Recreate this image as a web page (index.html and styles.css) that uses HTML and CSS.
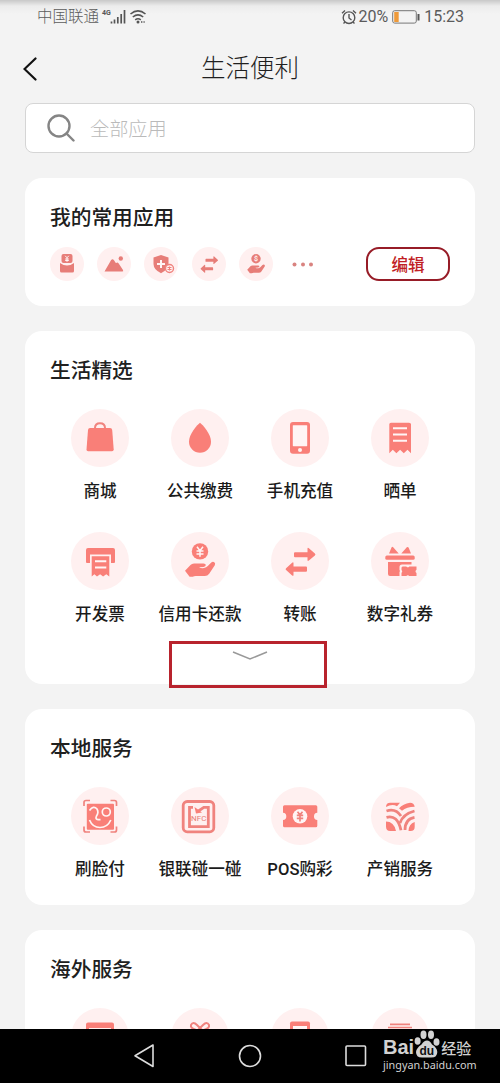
FILE: index.html
```html
<!DOCTYPE html>
<html lang="zh-CN">
<head>
<meta charset="utf-8">
<title>生活便利</title>
<link rel="stylesheet" href="styles.css">
</head>
<body>
<svg class="defs" width="0" height="0" aria-hidden="true">
  <symbol id="transfer" viewBox="0 0 58 58">
    <path d="M24 20.2h12.5v-3.4q0-1.6 1.4-.5l6 5.3q1.100.9 0 1.900l-6 5.100q-1.400 1-1.400-.5v-2.800H24q-1 0-1-1v-3.100q0-1 1-1z"/>
    <path d="M35 34.600H22.500v-3.400q0-1.600-1.400-.5l-6 5.500q-1.100.9 0 1.900l6 5.300q1.400 1 1.400-.5v-3.200H35q1 0 1-1v-3.100q0-1-1-1z"/>
  </symbol>
  <symbol id="hand" viewBox="0 0 58 58">
    <path d="M14 38.800l5.500-5.800q1.300-1.400 3.500-1.500h9.500q2.300 0 2.300 1.500 0 1.600-2.300 1.900l-4.500.4q2 1.200 5 .8 2.200-.3 3.800-2l3.200-3.400q1.700-1.500 3.300-.5 1.400 1 .5 3l-5.600 8.600q-1.600 2.200-4.400 2.200h-9q-2 0-3 .8h-3.200z"/>
  </symbol>
</svg>
<main class="screen">
  <div class="status">
    <span class="carrier">中国联通</span>
    <svg class="signal" viewBox="0 0 48 20"><text x="2" y="8" class="g4">4G</text><path class="bars" d="M11.500 14.500v2M14.500 12.500v4M17.800 10v6.500M21.200 7v9.500M24.500 3v13.500"/><path class="wifi" d="M30.500 7q7.500-6.200 15 0M32.800 10q5.200-4.200 10.400 0M35.200 12.800q2.800-2.200 5.600 0"/><circle cx="38" cy="15" r="1.500"/><path d="M41 15h1.400M43.500 15h1.200" class="wifi"/></svg>
    <span class="grow"></span>
    <svg class="alarm" viewBox="0 0 16 16"><circle cx="8" cy="8.700" r="5.800"/><path d="M8 5v4l2.500 2M1 4.200L4 1.500M12 1.500l3 2.700M4 13l-1.500 1.500M12 13l1.500 1.500"/></svg>
    <span class="percent">20%</span>
    <svg class="battery" viewBox="0 0 28 14"><rect x=".7" y=".7" width="23.600" height="12.400" rx="2"/><path class="charge" d="M2.200 2h4.500v10H2.200z"/><path class="tip" d="M26.500 4v6.500"/></svg>
    <span class="clock">15:23</span>
  </div>
  <header class="header">
    <svg class="back" viewBox="0 0 14 24"><path d="M12.500 1.500L1.500 12l11 10.500"/></svg>
    <h1 class="page-title">生活便利</h1>
  </header>
  <div class="search">
    <svg class="lens" viewBox="0 0 28 28"><circle cx="12" cy="12" r="10.500"/><path d="M19.500 19.500l7 7"/></svg>
    <span>全部应用</span>
  </div>

  <section class="card favorites">
    <h2 class="card-title">我的常用应用</h2>
    <div class="fav-row">
      <div class="fav-icons">
        <svg class="icon mini" viewBox="0 0 34 34"><rect x="11.500" y="7" width="11" height="9" rx="2"/><path d="M10 16q7 5 14 0v8q0 1.500-1.500 1.500h-11Q10 25.500 10 24z"/><path class="cut thin" d="M15.200 8.800l1.800 2 1.800-2M17 10.800v4M15.200 12h3.600M15.200 13.500h3.600"/></svg>
        <svg class="icon mini" viewBox="0 0 34 34"><path d="M7.500 24.500L14 13.300q1.500-2.300 3 0l2 3q1.300-1.600 2.700.2l4.300 6.500q.8 1.500-.8 1.500z"/><circle cx="23.800" cy="11.500" r="2.200"/></svg>
        <svg class="icon mini" viewBox="0 0 34 34"><path d="M17 8l7.500 2.500v6.500q0 5.500-7.500 9.200-7.500-3.700-7.500-9.200v-6.500z"/><path class="cut" d="M17 13v8M13 17h8"/><circle class="ring" cx="25.500" cy="21.500" r="4"/><path class="line thin" d="M23.500 20.500h4M23.500 22.500h4M25.500 19.500v4"/></svg>
        <svg class="icon mini" viewBox="0 0 58 58"><use href="#transfer"/></svg>
        <svg class="icon mini" viewBox="0 0 58 58"><circle cx="29" cy="20" r="8"/><text x="29" y="24" class="dollar">$</text><use href="#hand"/></svg>
        <svg class="more" viewBox="0 0 34 34"><circle cx="8.500" cy="17.500" r="2"/><circle cx="17" cy="17.500" r="2"/><circle cx="25" cy="17.500" r="2"/></svg>
      </div>
      <button class="edit">编辑</button>
    </div>
  </section>

  <section class="card featured">
    <h2 class="card-title">生活精选</h2>
    <div class="apps">
      <div class="app"><svg class="icon" viewBox="0 0 58 58"><path class="line" d="M24 20v-1q0-4.800 5-4.800t5 4.800v1"/><path d="M19 19h20q2 0 2.200 2l1.500 19.500q0 1.800-1.700 1.800H17.200q-1.800 0-1.700-1.800L17 21q.2-2 2-2z"/></svg><span>商城</span></div>
      <div class="app"><svg class="icon" viewBox="0 0 58 58"><path d="M29 13.700C32 16 40 25 40 32.700a11 11 0 0 1-22 0C18 25 26 16 29 13.700z"/></svg><span>公共缴费</span></div>
      <div class="app"><svg class="icon" viewBox="0 0 58 58"><rect x="19" y="13" width="20" height="31.700" rx="3"/><rect class="hole" x="21.800" y="16.200" width="14.400" height="21" rx=".6"/><circle class="hole" cx="29" cy="41" r="2"/></svg><span>手机充值</span></div>
      <div class="app"><svg class="icon" viewBox="0 0 58 58"><path d="M20 13.700h18q2 0 2 1.500v29l-3.500-3.500-3.700 3.500-3.700-3.500-3.700 3.500-3.600-3.500-3.500 3.500v-29q0-1.500 1.700-1.500z"/><path class="cut" d="M22 19.300h14M22 25.500h14M22 31.700h14"/></svg><span>晒单</span></div>
      <div class="app"><svg class="icon" viewBox="0 0 58 58"><path d="M17 16h25q2 0 2 2v12q0 1-1 1h-3v-8.500H19V31h-3q-1 0-1-1V18q0-2 2-2z"/><path d="M20.700 24.300h17.600v20.200l-3-2.300-3.200 2.300-3-2.300-3.100 2.300-2.600-2.300-2.700 2.300z"/><path class="cut" d="M24 29.200h11.300M24 35.500h11.300"/></svg><span>开发票</span></div>
      <div class="app"><svg class="icon" viewBox="0 0 58 58"><circle cx="29" cy="19.400" r="8.200"/><path class="cut yen" d="M26 14.800l3 4 3-4M29 18.800v6M25.500 19h7M25.500 22h7"/><use href="#hand"/></svg><span>信用卡还款</span></div>
      <div class="app"><svg class="icon" viewBox="0 0 58 58"><use href="#transfer"/></svg><span>转账</span></div>
      <div class="app"><svg class="icon" viewBox="0 0 58 58"><path d="M18 21.500l2.500-6q.7-1.300 1.700-.2l5.500 6.200zM30.300 21.500l5.500-6.200q1.200-1 1.900.4l2.300 5.800z"/><rect x="14.300" y="23.500" width="29.400" height="4.300" rx="1.500"/><path d="M17 30h23.500v2.500H31q-2.500 0-2.500 2.500v3q1 1 0 2v4H19q-2 0-2-2z"/><path d="M31.500 34.500h3.800q1.500 1.700 3 0h7.200v3.200q-2 1.600 0 3.200V44h-7.200q-1.500-1.700-3 0H30.500v-3q1.500-1.600 0-3.300v-2.200z"/></svg><span>数字礼券</span></div>
    </div>
    <div class="expand"><svg class="chevron" viewBox="0 0 36 10"><path d="M1 1l17 7L35 1"/></svg></div>
  </section>

  <section class="card local">
    <h2 class="card-title">本地服务</h2>
    <div class="apps">
      <div class="app"><svg class="icon" viewBox="0 0 58 58"><path class="line slim" d="M13 19v-3.500q0-2 2-2h4M39.500 13.500h4q2 0 2 2V19M45.500 39.500V43q0 2-2 2h-4M19 45h-4q-2 0-2-2v-3.500"/><rect x="15.800" y="16.800" width="27.200" height="26" rx="1"/><path class="cut slim" d="M18.500 23.500q4-5.500 7.500-1.500 2 3.500-.5 7-1.500 3.500 1.500 3.700h2.500M18.500 33q3 7.500 10.500 7.500T39.800 33"/><circle class="cut slim" cx="35.300" cy="25" r="4"/></svg><span>刷脸付</span></div>
      <div class="app"><svg class="icon" viewBox="0 0 58 58"><rect class="ring wide" x="12.200" y="14.500" width="30.600" height="30.300" rx="4"/><path class="line wide" d="M22 20.300h-3.500v19.400h18.800V20.300h-4.500L26 25"/><path d="M23.500 20l1.500 6.500 6-1z"/><text x="27.700" y="34" class="nfc">NFC</text></svg><span>银联碰一碰</span></div>
      <div class="app"><svg class="icon" viewBox="0 0 58 58"><path d="M13.500 18.300h31.300q1.500 0 1.500 1.500v6q-3.300.2-3.300 3.600t3.300 3.600v5.800q0 1.500-1.500 1.500H13.500q-1.500 0-1.500-1.500V33q3.300-.2 3.300-3.600T12 25.800v-6q0-1.500 1.500-1.500z"/><circle class="hole" cx="29" cy="29.300" r="7.300"/><path class="line slim" d="M26.500 24.800l2.500 3 2.500-3M29 27.500v7M25.800 28.300h6.400M25.800 31.300h6.400"/></svg><span>POS购彩</span></div>
      <div class="app"><svg class="icon" viewBox="0 0 58 58"><path d="M15 20q0-4.300 4.300-4.300H29l-3 3.500q-5-2.500-11 .8zM39 15.700q4 0 4.700 4-8 0-12.700 4l-3-2.500q4-4.500 11-5.500z"/><path class="line wide" d="M15.500 24q9-3 14.500 5M15.500 30.300q11-3 14.500 13M29 36q3-9 14.500-12M34 43q0-11 9.500-12.700"/><path d="M15 34.500q8 0 10 9.500h-5.700Q15 44 15 39.500zM43.700 35q-6 2-6.200 9h2q4.200 0 4.200-4.300z"/></svg><span>产销服务</span></div>
    </div>
  </section>

  <section class="card overseas">
    <h2 class="card-title">海外服务</h2>
    <div class="apps">
      <div class="app"><svg class="icon" viewBox="0 0 58 58"><path d="M17 14.500h24q2 0 2 2V24h-3v-4H18v4h-3v-7.500q0-2 2-2z"/></svg></div>
      <div class="app"><svg class="icon" viewBox="0 0 58 58"><path class="line" d="M25 22q-6-2-5-5 2-4 6 0l7 7M33 22q6-2 5-5-2-4-6 0l-7 7"/></svg></div>
      <div class="app"><svg class="icon" viewBox="0 0 58 58"><rect x="19" y="13.500" width="20" height="31" rx="2"/><rect class="hole" x="22" y="18" width="14" height="20"/></svg></div>
      <div class="app"><svg class="icon" viewBox="0 0 58 58"><path class="line slim" d="M19 16.300h20M17 19.500h24"/></svg></div>
    </div>
  </section>

  <nav class="nav">
    <svg viewBox="0 0 26 26"><path d="M22 2v21.500L4 12.800z"/></svg>
    <svg viewBox="0 0 26 26"><circle cx="13" cy="13" r="10.500"/></svg>
    <svg viewBox="0 0 26 26"><rect x="3" y="3" width="19.500" height="19.500" rx="1"/></svg>
  </nav>
  <div class="brand">
    <div class="brand-top"><span class="bai">Bai</span><svg class="paw" viewBox="0 0 26 28"><ellipse cx="3.600" cy="11" rx="3" ry="3.800"/><ellipse cx="9.500" cy="4.800" rx="3" ry="4.200"/><ellipse cx="17" cy="4.800" rx="3" ry="4.200"/><ellipse cx="22.500" cy="12" rx="3" ry="3.800"/><path d="M13 10.500q3 0 5 4 5 3 5.300 7.500 0 5.500-6 5.500H8q-6 0-6-5.500Q2.300 18 7.500 14.500q2.500-4 5.500-4z"/><text x="12.800" y="24.500">du</text></svg><span class="exp">经验</span></div>
    <div class="domain">jingyan.baidu.com</div>
  </div>
</main>
</body>
</html>
```
FILE: styles.css
```css
* { box-sizing: border-box; }
body { margin: 0; background: #f3f3f3; font-family: Roboto, "Noto Sans CJK SC", sans-serif; color: #1b1b1b; }
.defs { position: absolute; }
.screen { position: relative; width: 500px; height: 1083px; overflow: hidden; background: linear-gradient(#c8c8c8 0, #ececec 6px, #f3f3f3 14px); }
.status { display: flex; align-items: center; height: 34px; padding: 0 36px 0 37px; font-size: 15.5px; line-height: 34px; color: #5b5b5b; font-weight: 300; }
.signal { width: 48px; height: 20px; margin-left: 1px; fill: #555; }
.g4 { font: bold 7px Roboto, sans-serif; }
.bars { stroke: #555; stroke-width: 1.7; fill: none; transform: translateY(6px); }
.signal .bars { transform: none; }
.wifi { stroke: #555; stroke-width: 1.6; fill: none; }
.grow { flex: 1; }
.alarm { width: 16px; height: 16px; fill: none; stroke: #555; stroke-width: 1.4; }
.percent { margin-left: 1px; font-weight: 400; font-size: 16px; }
.battery { width: 28px; height: 14px; margin: 0 4px; fill: none; stroke: #777; }
.battery .charge { fill: #ee9a3a; stroke: none; }
.battery .tip { stroke: #555; stroke-width: 2; }
.clock { font-weight: 400; font-size: 16px; }
.header { display: grid; grid-template-columns: 50px 1fr 50px; align-items: center; height: 69px; }
.back { width: 14px; height: 24px; margin-left: 23px; fill: none; stroke: #111; stroke-width: 2.2; stroke-linecap: round; }
.page-title { margin: 0; text-align: center; font-size: 24.5px; line-height: 36px; font-weight: 300; color: #1f1f1f; }
.search { display: flex; align-items: center; height: 50px; margin: 0 25px; padding: 0 21px; gap: 15px; border: 1px solid #d5d5d5; border-radius: 8px; background: #fff; font-size: 19.2px; font-weight: 300; color: #bababa; }
.lens { width: 28px; height: 28px; fill: none; stroke: #858585; stroke-width: 2.4; stroke-linecap: round; }
.card { margin: 25px 25px 0; padding: 25px 25px 0; border-radius: 17px; background: #fff; }
.card-title { margin: 0; font-size: 20.7px; line-height: 30px; font-weight: 500; color: #202020; }
.favorites { height: 128px; margin-top: 25px; }
.fav-row { display: flex; align-items: center; justify-content: space-between; height: 34px; margin-top: 14px; }
.fav-icons { display: flex; gap: 13.200px; }
.icon { display: block; width: 58px; height: 58px; flex: none; border-radius: 50%; background: #fff0f0; fill: #f97f78; }
.icon.mini { width: 34px; height: 34px; fill: #e77d78; }
.more { width: 34px; height: 34px; fill: #d98380; }
.line, .ring { fill: none; stroke: #f0837e; stroke-width: 2; }
.ring { fill: #fff0f0; stroke-width: 1.400; }
.cut { fill: none; stroke: #fff5f5; stroke-width: 2; }
.hole { fill: #fff5f5; }
.yen { stroke-width: 1.500; }
.slim { stroke-width: 1.700; }
.thin { stroke-width: 1; }
.wide { stroke-width: 2.800; }
.dollar { font: bold 12px Roboto, sans-serif; text-anchor: middle; fill: #fff0f0; }
.nfc { font: 8px Roboto, sans-serif; text-anchor: middle; fill: #e77d78; }
.edit { width: 84px; height: 34px; padding: 0; border: 2px solid #971c27; border-radius: 13px; background: #fff; font: 500 16.600px/30px "Noto Sans CJK SC", sans-serif; color: #c11f25; }
.featured { height: 353px; }
.local { height: 196px; }
.overseas { height: 180px; }
.apps { display: grid; grid-template-columns: repeat(4, 100px); grid-auto-rows: 122.500px; padding-top: 23px; }
.app { display: flex; flex-direction: column; align-items: center; font-size: 16.600px; line-height: 24px; font-weight: 500; white-space: nowrap; }
.app span { margin-top: 13px; }
.expand { position: absolute; left: 169px; top: 641px; width: 158px; height: 47px; border: 3px solid #b8232d; display: flex; justify-content: center; padding-top: 7px; }
.chevron { width: 36px; height: 10px; margin-left: 4px; fill: none; stroke: #999; stroke-width: 1.500; }
.nav { position: absolute; left: 0; top: 1029px; width: 500px; height: 54px; display: flex; justify-content: center; align-items: center; gap: 80px; background: #000; }
.nav svg { width: 26px; height: 26px; fill: none; stroke: #ddd; stroke-width: 1.600; stroke-linejoin: round; }
.brand { position: absolute; left: 383px; top: 1029px; width: 92px; color: #d2d2d2; }
.brand-top { display: flex; align-items: flex-end; height: 29px; }
.bai { font: bold 20px/22px "Liberation Sans", sans-serif; }
.paw { width: 26px; height: 28px; fill: #d2d2d2; }
.paw text { font: bold 12px "Liberation Sans", sans-serif; text-anchor: middle; fill: #111; }
.exp { margin-left: 1px; font: 500 15px/20px "Noto Sans CJK SC", sans-serif; }
.domain { font: 10.800px/14px "Noto Sans", sans-serif; }
```
